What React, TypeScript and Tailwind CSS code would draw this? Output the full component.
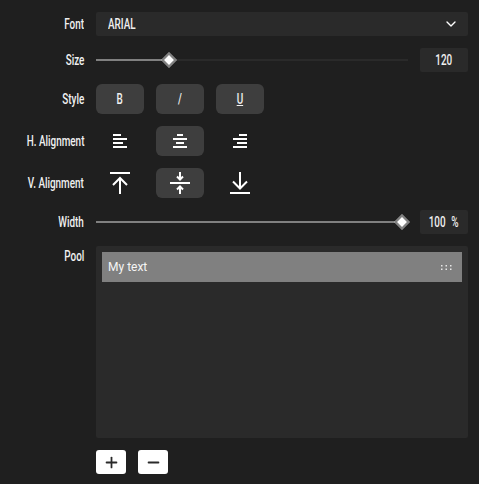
import { ChevronDown, Plus, Minus } from "lucide-react";
import type { ReactNode } from "react";

// no Oswald here, so Roboto gets squeezed to the same width
function Narrow({ children, origin = "origin-center" }: { children: ReactNode; origin?: string }) {
  return <span className={`inline-block scale-x-[0.66] whitespace-nowrap text-[15px] font-medium leading-5 text-[#f0f0f0] ${origin}`}>{children}</span>;
}

function Row({ label, children, top }: { label: string; children: ReactNode; top?: boolean }) {
  return (
    <div className={`flex gap-3 ${top ? "items-start" : "items-center"}`}>
      <div className="flex w-[84px] shrink-0 justify-end overflow-visible">
        <Narrow origin="origin-right">{label}</Narrow>
      </div>
      {children}
    </div>
  );
}

function Slider({ pct, value }: { pct: number; value: string }) {
  return (
    <div className="flex flex-1 items-center gap-3">
      <div className="relative h-[2px] flex-1 bg-[#2a2a2a]">
        <div className="h-full bg-[#808080]" style={{ width: `${pct}%` }} />
        <div
          className="absolute top-1/2 size-[11px] -translate-x-1/2 -translate-y-1/2 rotate-45 border-2 border-[#808080] bg-white"
          style={{ left: `${pct}%` }}
        />
      </div>
      <div className="flex h-6 w-12 items-center justify-center rounded-[2px] bg-[#2a2a2a] [word-spacing:5px]">
        <Narrow>{value}</Narrow>
      </div>
    </div>
  );
}

function ToolButton({ active, children }: { active?: boolean; children: ReactNode }) {
  return (
    <div className={`flex h-[30px] w-12 items-center justify-center rounded-md ${active ? "bg-[#3e3e3e]" : ""}`}>
      {children}
    </div>
  );
}

function AlignIcon({ rows }: { rows: number[][] }) {
  return (
    <svg width="16" height="16" viewBox="0 0 16 16" fill="white">
      {rows.map((r, i) => (
        <rect key={i} x={r[0]} y={1 + i * 4} width={r[1]} height="2" />
      ))}
    </svg>
  );
}

function VAlignIcon({ kind }: { kind: "top" | "middle" | "bottom" }) {
  return (
    <svg width="22" height="24" viewBox="0 0 22 24" fill="none" stroke="white" strokeWidth="2">
      {kind === "top" && (
        <>
          <path d="M1 2h20" />
          <path d="M11 23V7M4 14l7-7 7 7" />
        </>
      )}
      {kind === "middle" && (
        <>
          <path d="M1 12h20" />
          <path d="M11 1v7M8 5.500l3 3 3-3" />
          <path d="M11 23v-7M8 18.500l3-3 3 3" />
        </>
      )}
      {kind === "bottom" && (
        <>
          <path d="M1 22h20" />
          <path d="M11 1v16.500M4 10.500l7 7 7-7" />
        </>
      )}
    </svg>
  );
}

export default function App() {
  return (
    <div className="flex h-[484px] w-[479px] flex-col gap-3 overflow-hidden bg-[#1f1f1f] pt-3 pr-[11px] font-['Roboto',sans-serif]">
      <Row label="Font">
        <div className="flex h-6 flex-1 items-center justify-between rounded-[2px] bg-[#2a2a2a] pr-[9px] pl-3">
          <Narrow origin="origin-left">ARIAL</Narrow>
          <ChevronDown size={16} strokeWidth={2} className="text-white" />
        </div>
      </Row>
      <Row label="Size">
        <Slider pct={23.400} value="120" />
      </Row>
      <Row label="Style">
        <div className="flex gap-3">
          <ToolButton active><Narrow>B</Narrow></ToolButton>
          <ToolButton active><Narrow>/</Narrow></ToolButton>
          <ToolButton active><Narrow><span className="underline">U</span></Narrow></ToolButton>
        </div>
      </Row>
      <Row label="H. Alignment">
        <div className="flex gap-3">
          <ToolButton><AlignIcon rows={[[1, 8], [1, 14], [1, 10], [1, 14]]} /></ToolButton>
          <ToolButton active><AlignIcon rows={[[5, 6], [1, 14], [4, 8], [1, 14]]} /></ToolButton>
          <ToolButton><AlignIcon rows={[[7, 8], [1, 14], [5, 10], [1, 14]]} /></ToolButton>
        </div>
      </Row>
      <Row label="V. Alignment">
        <div className="flex gap-3">
          <ToolButton><VAlignIcon kind="top" /></ToolButton>
          <ToolButton active><VAlignIcon kind="middle" /></ToolButton>
          <ToolButton><VAlignIcon kind="bottom" /></ToolButton>
        </div>
      </Row>
      <Row label="Width">
        <Slider pct={98} value="100 %" />
      </Row>
      <Row label="Pool" top>
        <div className="h-[192px] flex-1 rounded-[2px] bg-[#2a2a2a] p-[6px]">
          <div className="flex h-[30px] items-center justify-between bg-[#808080] pr-[10px] pl-[6px] text-[12px] text-[#f5f5f5]">
            <span>My text</span>
            <svg width="11" height="5" viewBox="0 0 11 5" fill="#e8e8e8">
              <rect x="0" y="0" width="1.500" height="1.500" /><rect x="4.500" y="0" width="1.500" height="1.500" /><rect x="9" y="0" width="1.500" height="1.500" />
              <rect x="0" y="3.500" width="1.500" height="1.500" /><rect x="4.500" y="3.500" width="1.500" height="1.500" /><rect x="9" y="3.500" width="1.500" height="1.500" />
            </svg>
          </div>
        </div>
      </Row>
      <div className="flex gap-3 pl-[96px]">
        <div className="flex h-6 w-[30px] items-center justify-center rounded-[3px] bg-white">
          <Plus size={17} strokeWidth={2.500} className="text-[#2a2a2a]" />
        </div>
        <div className="flex h-6 w-[30px] items-center justify-center rounded-[3px] bg-white">
          <Minus size={17} strokeWidth={2.500} className="text-[#2a2a2a]" />
        </div>
      </div>
    </div>
  );
}
